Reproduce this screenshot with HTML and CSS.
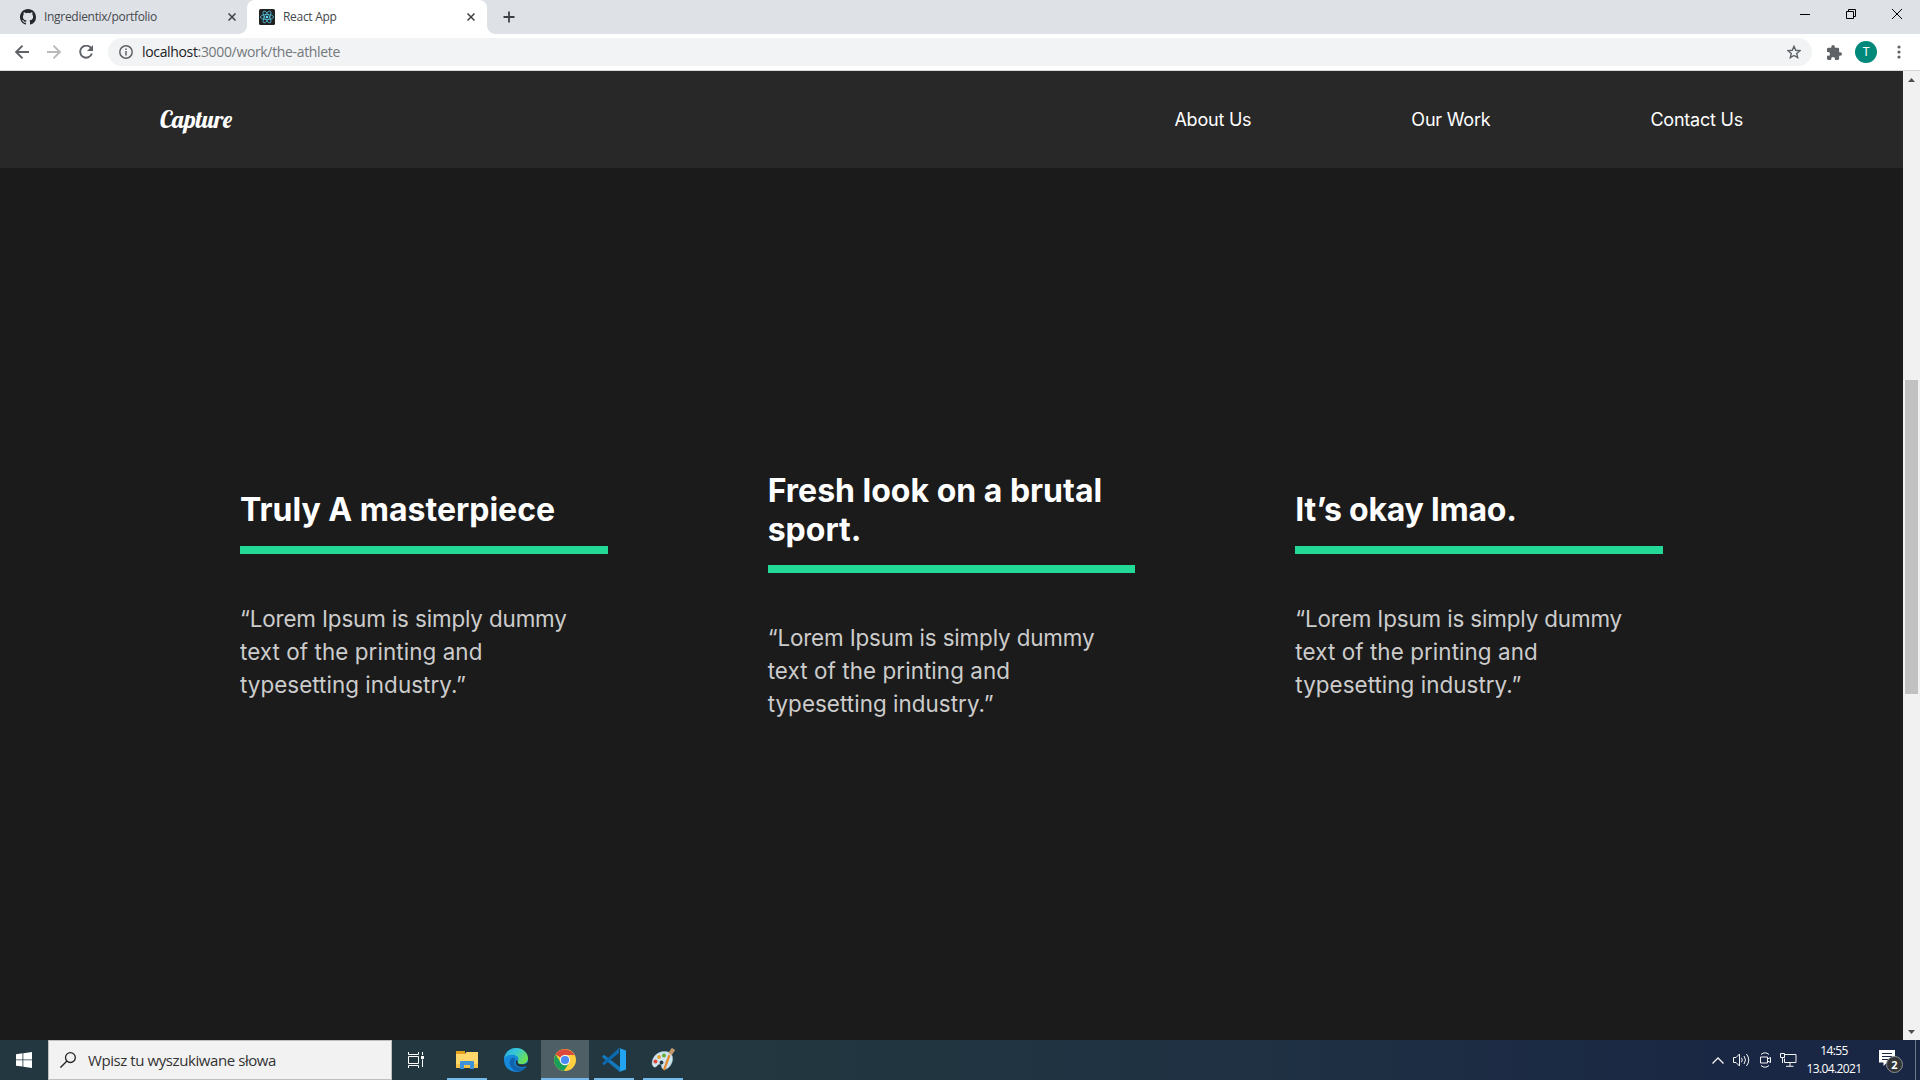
FILE: index.html
```html
<!DOCTYPE html>
<html lang="pl">
<head>
<meta charset="utf-8">
<title>React App</title>
<link rel="stylesheet" href="styles.css">
</head>
<body>
<div class="tabs">
  <div class="tab tab-idle">
    <svg class="fav" viewBox="0 0 16 16"><path fill="#24292e" d="M8 0C3.58 0 0 3.58 0 8c0 3.54 2.29 6.53 5.47 7.59.4.07.55-.17.55-.38 0-.19-.01-.82-.01-1.49-2.01.37-2.53-.49-2.69-.94-.09-.23-.48-.94-.82-1.13-.28-.15-.68-.52-.01-.53.63-.01 1.08.58 1.23.82.72 1.21 1.87.87 2.33.66.07-.52.28-.87.51-1.07-1.78-.2-3.64-.89-3.64-3.95 0-.87.31-1.59.82-2.15-.08-.2-.36-1.02.08-2.12 0 0 .67-.21 2.2.82a7.6 7.6 0 0 1 4 0c1.53-1.04 2.2-.82 2.2-.82.44 1.1.16 1.92.08 2.12.51.56.82 1.27.82 2.15 0 3.07-1.87 3.75-3.65 3.95.29.25.54.73.54 1.48 0 1.07-.01 1.93-.01 2.2 0 .21.15.46.55.38A8.01 8.01 0 0 0 16 8c0-4.42-3.58-8-8-8z"/></svg>
    <span class="tab-title title-long">Ingredientix/portfolio</span>
    <svg class="x" viewBox="0 0 8 8"><path d="M.5.5l7 7M7.500.5l-7 7"/></svg>
  </div>
  <div class="tab tab-active">
    <svg class="fav" viewBox="0 0 16 16"><rect width="16" height="16" rx="1.500" fill="#222"/><g fill="none" stroke="#53c1de" stroke-width=".8"><ellipse cx="8" cy="8" rx="6.600" ry="2.500"/><ellipse cx="8" cy="8" rx="6.600" ry="2.500" transform="rotate(60 8 8)"/><ellipse cx="8" cy="8" rx="6.600" ry="2.500" transform="rotate(120 8 8)"/></g><circle cx="8" cy="8" r="1.300" fill="#61dafb"/></svg>
    <span class="tab-title">React App</span>
    <svg class="x" viewBox="0 0 8 8"><path d="M.5.5l7 7M7.500.5l-7 7"/></svg>
  </div>
  <svg class="plus" viewBox="0 0 12 12"><path d="M6 .5v11M.5 6h11"/></svg>
  <div class="window-buttons">
    <svg viewBox="0 0 10 10"><path d="M0 5.500h10"/></svg>
    <svg viewBox="0 0 10 10"><path d="M.5 2.500h7v7h-7zM2.500 2.500v-2h7v7h-2"/></svg>
    <svg viewBox="0 0 10 10"><path d="M0 0l10 10M10 0L0 10"/></svg>
  </div>
</div>
<div class="toolbar">
  <svg class="tool back" viewBox="0 0 14 14"><path d="M14 7H1.500M7.500.7L1.200 7l6.300 6.300"/></svg>
  <svg class="tool forward" viewBox="0 0 14 14"><path d="M0 7h12.500M6.500.7L12.800 7l-6.300 6.300"/></svg>
  <svg class="tool reload" viewBox="0 0 14 14"><path d="M12.100 3.200A6 6 0 1 0 12.900 8.500"/><path class="solid" d="M14 0v6H8z"/></svg>
  <div class="omnibox">
    <svg class="info" viewBox="0 0 14 14"><circle cx="7" cy="7" r="6.200"/><path d="M7 6v4.500M7 3.400V5"/></svg>
    <span class="url"><b>localhost</b>:3000/work/the-athlete</span>
    <svg class="star" viewBox="0 0 14 14"><path d="M7 1.300l1.700 4 4.300.4-3.300 2.800 1 4.200L7 10.500l-3.700 2.200 1-4.200L1 5.700l4.300-.4z"/></svg>
  </div>
  <svg class="puzzle" viewBox="2 1 21 21"><path d="M20.500 11H19V7a2 2 0 0 0-2-2h-4V3.500a2.500 2.500 0 0 0-5 0V5H4a2 2 0 0 0-2 2v3.800h1.500a2.700 2.700 0 0 1 0 5.400H2V20a2 2 0 0 0 2 2h3.800v-1.500a2.700 2.700 0 0 1 5.400 0V22H17a2 2 0 0 0 2-2v-4h1.500a2.500 2.500 0 0 0 0-5z"/></svg>
  <span class="avatar">T</span>
  <svg class="dots" viewBox="0 0 4 14"><circle cx="2" cy="2" r="1.600"/><circle cx="2" cy="7" r="1.600"/><circle cx="2" cy="12" r="1.600"/></svg>
</div>
<div class="viewport">
  <div class="page">
    <nav class="nav">
      <span class="logo">Capture</span>
      <ul class="links"><li>About Us</li><li>Our Work</li><li>Contact Us</li></ul>
    </nav>
    <main class="awards">
      <section class="award"><h3>Truly A masterpiece</h3><div class="line"></div><p><span class="tight">“Lorem Ipsum is simply dummy</span> <span class="loose">text of the printing and</span> <span>typesetting industry.”</span></p></section>
      <section class="award"><h3>Fresh look on a brutal sport.</h3><div class="line"></div><p><span class="tight">“Lorem Ipsum is simply dummy</span> <span class="loose">text of the printing and</span> <span>typesetting industry.”</span></p></section>
      <section class="award"><h3 class="short">It’s okay lmao.</h3><div class="line"></div><p><span class="tight">“Lorem Ipsum is simply dummy</span> <span class="loose">text of the printing and</span> <span>typesetting industry.”</span></p></section>
    </main>
  </div>
  <div class="scrollbar">
    <svg viewBox="0 0 7 4"><path d="M0 4l3.500-4L7 4z"/></svg>
    <div class="track"><div class="thumb"></div></div>
    <svg viewBox="0 0 7 4"><path d="M0 0l3.500 4L7 0z"/></svg>
  </div>
</div>
<footer class="taskbar">
  <div class="start"><svg viewBox="0 0 16 16"><path d="M0 2.200L6.500 1.300v6.200H0zM7.300 1.200L16 0v7.500H7.300zM0 8.300h6.500v6.300L0 13.700zM7.300 8.300H16V16l-8.700-1.200z"/></svg></div>
  <div class="search"><svg viewBox="0 0 16 16"><circle cx="10.400" cy="5.600" r="4.900"/><path d="M7 9L.4 15.600"/></svg><span>Wpisz tu wyszukiwane słowa</span></div>
  <div class="apps">
    <div class="app taskview"><svg width="16" height="16" viewBox="0 0 16 16"><path d="M.5 0v2.500h10V0M.5 16v-2.500h10V16M.5 4.500h10v7H.5zM14.500 0v3M14.500 7.500V15"/><path class="fill" d="M13 4h3v3h-3z"/></svg></div>
    <div class="app open"><svg width="22" height="18" viewBox="0 0 22 18"><path fill="#e4a11b" d="M0 0h9v4H0z"/><path fill="#ffd76b" d="M0 3h9l1.500-2H22v16H0z"/><path fill="#f7c34b" d="M0 13h22v4H0z"/><path fill="#3d92d8" d="M4 18v-7q0-1 1-1h12q1 0 1 1v7h-4v-4H8v4z"/></svg></div>
    <div class="app"><svg width="24" height="24" viewBox="0 0 24 24"><defs><linearGradient id="edge-top" x1="0" y1="0" x2="1" y2=".5"><stop offset="0" stop-color="#28a5e4"/><stop offset=".5" stop-color="#36c7d5"/><stop offset="1" stop-color="#6be052"/></linearGradient></defs><circle cx="12" cy="12" r="12" fill="#168bdc"/><path fill="url(#edge-top)" d="M0 11C1 4 6 0 12 0c7 0 12 5 12 10 0 4-3 6-6 6-4 0-5-1-4-3 2-4-3-7-7-6-4 0-6 2-7 4z"/><path fill="#1263ae" d="M8 10c-3 2-3 6-1 9 2 3 5 5 8 4.500 4-1 6.500-3 7.500-5-4 2-9 1.500-11-1-2-2-1.500-4.500 0-6-1-1.500-2.500-2-3.500-1.500z"/><path fill="#22373f" d="M12.500 12c-1.500 2-1 4.500 1 6 3 2 7 1 9.500-.5l1.500-1v-3C22 16 20 16.500 18 16.300c-4 0-5-1-4-3z"/></svg></div>
    <div class="app open current"><svg width="22" height="22" viewBox="0 0 22 22"><circle cx="11" cy="11" r="11" fill="#ffcf3e"/><path fill="#db493c" d="M11 11L1.500 5.500a11 11 0 0 1 19 .5H11z"/><path fill="#1a9e58" d="M1.500 5.500a11 11 0 0 0 8.300 16.400L15.300 13.500 6.700 13.500z"/><circle cx="11" cy="11" r="5.200" fill="#f4f4f4"/><circle cx="11" cy="11" r="4.100" fill="#4a8af4"/></svg></div>
    <div class="app open vscode"><svg width="24" height="24" viewBox="0 0 24 24"><path fill="#1478bd" d="M0 8.500L2 6.800 18 19v5L1 10z"/><path fill="#0b69ad" d="M0 15.500L17 0v5L2 17.300z"/><path fill="#23a4ef" d="M17 0l7 2.500v19L17 24l1-1V1z"/></svg></div>
    <div class="app open paint"><svg width="24" height="24" viewBox="0 0 24 24"><path fill="#cfe5f0" stroke="#9fc4d8" stroke-width=".5" d="M3 9C6 4 14 2 19 5c4 3 3 9 0 13s-7 4-8 2 0-4-2-4c-3 0-3 4-6 3-3-2-2-7 0-10z"/><circle cx="4.500" cy="13.500" r="2" fill="#e04836"/><circle cx="8" cy="9" r="2" fill="#e8a13b"/><circle cx="13" cy="7.500" r="2" fill="#63ad35"/><circle cx="10.500" cy="14.500" r="1.900" fill="#263c46"/><path stroke="#e58a2e" stroke-width="2.200" d="M18.500 7L13 22"/><path stroke="#c4986b" stroke-width="4" d="M22.500 1L19 6"/></svg></div>
  </div>
  <div class="tray">
    <svg width="12" height="7" viewBox="0 0 12 7"><path stroke-width="1.300" d="M.5 6.500L6 1l5.500 5.500"/></svg>
    <svg width="17" height="14" viewBox="0 0 17 14"><path d="M.5 4.500H3L6.500 1v12L3 9.500H.5zM8.500 4.800q1.500 2.200 0 4.400M11 3q3 4 0 8M13.500 1q4.500 6 0 12"/></svg>
    <svg width="12" height="16" viewBox="0 0 12 16"><path d="M1.500 5h7v6h-7zM8.500 7l3-1.500v5l-3-1.500M2 2.500q4-3.500 8 0M2 13.500q4 3.500 8 0"/></svg>
    <svg width="17" height="14" viewBox="0 0 17 14"><path d="M4.500 1.500h11.500v8H4.500v-4M.5.5h4v4h-4zM2.500 4.500V10M10 9.500v3.500M6 13.300h7.500"/></svg>
    <div class="clock"><span>14:55</span><span>13.04.2021</span></div>
    <div class="notice"><svg width="16" height="16" viewBox="0 0 16 16"><path fill="#fff" stroke="none" d="M0 0h16v12.500H8L4.500 16v-3.500H0z"/><path stroke="#1b2845" d="M3 3.500h10M3 6.500h10M3 9.500h6"/></svg><b>2</b></div>
    <i class="peek"></i>
  </div>
</footer>
</body>
</html>
```
FILE: styles.css
```css
* { box-sizing: border-box; margin: 0; padding: 0; }
body { width: 1920px; height: 1080px; overflow: hidden; display: flex; flex-direction: column; font-family: "Open Sans", "Noto Sans", sans-serif; }
svg { display: block; flex: none; }

.tabs { height: 34px; flex: none; display: flex; background: #dee1e6; align-items: stretch; }
.tab { display: flex; align-items: center; }
.tab-idle { width: 247px; padding: 0 11px 0 20px; }
.tab-active { width: 240px; padding: 0 12px; background: #fff; border-radius: 8px 8px 0 0; position: relative; }
.tab-active::before, .tab-active::after { content: ""; position: absolute; bottom: 0; width: 8px; height: 8px; }
.tab-active::before { left: -8px; background: radial-gradient(circle at 0 0, transparent 7.500px, #fff 8px); }
.tab-active::after { right: -8px; background: radial-gradient(circle at 100% 0, transparent 7.500px, #fff 8px); }
.fav { width: 16px; height: 16px; }
.tab-title { margin-left: 8px; font-size: 12px; line-height: 16px; letter-spacing: -0.3px; color: #45494d; white-space: nowrap; }
.title-long { letter-spacing: -0.3px; }
.x { width: 8px; height: 8px; margin-left: auto; fill: none; stroke: #3c4043; stroke-width: 1.500; }
.plus { width: 12px; height: 12px; margin: 11px 0 0 16px; fill: none; stroke: #3c4043; stroke-width: 1.800; }
.window-buttons { margin: 9px 18px 0 auto; display: flex; gap: 36px; }
.window-buttons svg { width: 10px; height: 10px; fill: none; stroke: #000; stroke-width: 1; }

.toolbar { height: 37px; flex: none; display: flex; align-items: center; background: #fff; border-bottom: 1px solid #d6d8da; padding-left: 15px; }
.tool { width: 14px; height: 14px; fill: none; stroke: #5f6368; stroke-width: 1.900; }
.tool + .tool { margin-left: 18px; }
.tool.forward { stroke: #bababc; }
.tool .solid { fill: #5f6368; stroke: none; }
.omnibox { flex: none; width: 1704px; height: 28px; margin-left: 15px; padding: 0 11px; border-radius: 14px; background: #f1f3f4; display: flex; align-items: center; }
.info { width: 14px; height: 14px; fill: none; stroke: #5f6368; stroke-width: 1.500; }
.url { margin-left: 9px; font-size: 14px; line-height: 20px; letter-spacing: -0.34px; color: #74787c; }
.url b { color: #202124; font-weight: 400; }
.star { width: 14px; height: 14px; margin-left: auto; fill: none; stroke: #5f6368; stroke-width: 1.400; }
.puzzle { width: 15px; height: 15px; margin-left: 15px; fill: #5f6368; }
.avatar { width: 22px; height: 22px; margin-left: 13px; border-radius: 50%; background: #00897b; color: #fff; font: 12px/22px Roboto, sans-serif; text-align: center; }
.dots { width: 4px; height: 14px; margin-left: 20px; fill: #5f6368; }

.viewport { flex: none; height: 969px; display: flex; }
.page { width: 1903px; background: #1b1b1b; display: flex; flex-direction: column; font-family: Inter, sans-serif; }
.nav { height: 97px; flex: none; padding: 0 160px; background: #282828; display: flex; align-items: center; justify-content: space-between; color: #fff; }
.logo { font: 400 24px/30px Lobster, "Liberation Serif", serif; padding-bottom: 2px; }
.links { display: flex; gap: 160px; list-style: none; font-size: 18px; line-height: 22px; letter-spacing: -0.22px; }
.awards { flex: 1; display: flex; align-items: center; padding: 16px 160px 0; }
.award { flex: 1; padding: 0 80px; }
.award h3 { font-size: 32px; line-height: 1.21; font-weight: 700; color: #fff; }
.award .short { letter-spacing: -0.22px; }
.line { height: 8px; margin: 16px 0; background: #23d997; }
.award p { padding: 32px 0; font-size: 22.400px; line-height: 33px; color: #ccc; }
.award p span { display: block; letter-spacing: 0.05px; }
.award p .tight { letter-spacing: -0.14px; }
.award p .loose { letter-spacing: 0.08px; }

.scrollbar { width: 17px; background: #f1f1f1; display: flex; flex-direction: column; align-items: center; }
.scrollbar svg { width: 7px; height: 4px; margin: 7px 0 6px; fill: #505050; }
.track { flex: 1; width: 13px; padding-top: 292px; }
.thumb { height: 314px; background: #c1c1c1; }

.taskbar { height: 40px; flex: none; display: flex; background: linear-gradient(90deg, #22373f 0 38%, #1f3143 65%, #1a2744 90%); }
.start { width: 48px; padding: 12px 16px; }
.start svg { width: 16px; height: 16px; fill: #fff; }
.search { width: 344px; display: flex; align-items: center; background: #f2f2f2; border: 1px solid #bfbfbf; padding-left: 11px; }
.search svg { width: 16px; height: 16px; fill: none; stroke: #222; stroke-width: 1.300; }
.search span { margin-left: 12px; font-size: 15px; color: #333; letter-spacing: -0.42px; white-space: nowrap; }
.apps { display: flex; gap: 1px; }
.app { width: 48px; display: flex; align-items: center; justify-content: center; position: relative; }
.app.open::after { content: ""; position: absolute; bottom: 0; left: 4px; right: 4px; height: 2px; background: #76b9ed; }
.app.current { background: #4e5f66; }
.app.current::after { left: 0; right: 0; }
.taskview { margin-right: 2px; fill: none; stroke: #fff; }
.taskview .fill { fill: #fff; stroke: none; }
.tray { margin-left: auto; display: flex; align-items: center; fill: none; stroke: #f4f4f4; color: #fff; }
.tray svg + svg { margin-left: 9px; }
.clock { width: 54px; margin: 0 1px 0 10px; display: flex; flex-direction: column; align-items: center; font-size: 12px; line-height: 18px; letter-spacing: -0.6px; white-space: nowrap; }
.notice { width: 24px; height: 24px; margin: 2px 0 0 17px; position: relative; stroke: none; }
.notice svg { margin-top: 1px; }
.notice b { position: absolute; left: 7px; top: 7px; width: 17px; height: 17px; border: 1px solid #8b8f96; border-radius: 50%; background: #333537; font-size: 11px; line-height: 15px; text-align: center; }
.peek { width: 5px; height: 40px; margin-left: 12px; border-left: 1px solid #6f7889; }
```
